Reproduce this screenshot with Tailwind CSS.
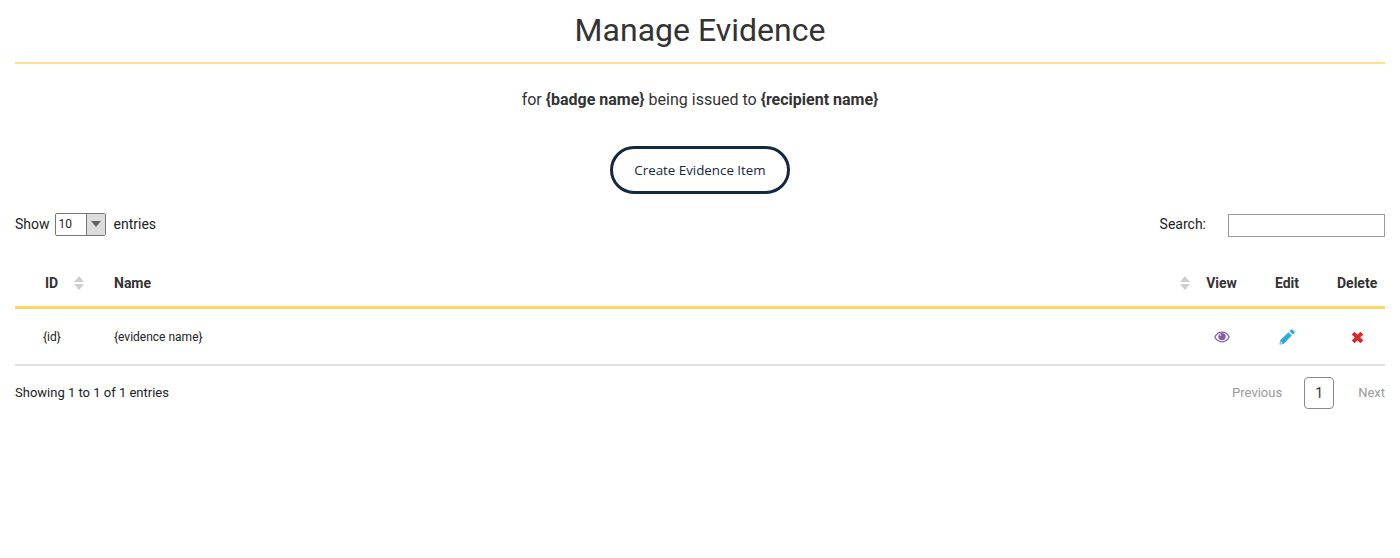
<!DOCTYPE html>
<html lang="en">
<head>
    <meta charset="UTF-8">
    <meta name="viewport" content="width=device-width, initial-scale=1.0">
    <title>Manage Evidence</title>
    <script src="https://cdn.jsdelivr.net/npm/@tailwindcss/browser@4"></script>
</head>
<body class="bg-white text-[#333] font-['Roboto',sans-serif]">
    <div class="px-[15px]">
        <h1 class="h-[64px] pt-[10px] border-b-2 border-[#fde28e] text-center text-[32px] leading-[40px]">Manage Evidence</h1>
        <p class="mt-[25px] text-center text-[16px] leading-[22px]">for <b>{badge name}</b> being issued to <b>{recipient name}</b></p>

        <div class="mt-[35px] flex justify-center">
            <button class="w-[180px] h-[48px] pt-[2px] rounded-full border-[3px] border-[#12293e] text-[13.33px] text-[#12293e] font-['Open_Sans',sans-serif]">Create Evidence Item</button>
        </div>

        <div class="mt-[18px] h-[24px] flex items-center justify-between text-[14px] text-[#222]">
            <div class="flex items-center">
                <span>Show</span>
                <span class="ml-[5px] w-[51px] h-[23px] flex border border-[#777] rounded-[2px] text-[12px]">
                    <span class="flex-1 pl-[3px] leading-[21px]">10</span>
                    <span class="w-[19px] flex items-center justify-center bg-[#dcdcdc] border-l border-[#777]">
                        <svg width="10" height="6" viewBox="0 0 10 6"><path d="M0 0h10L5 6z" fill="#666"/></svg>
                    </span>
                </span>
                <span class="ml-[8px]">entries</span>
            </div>
            <div class="flex items-center">
                <span>Search:</span>
                <input type="text" class="ml-[22px] mt-[2px] w-[157px] h-[23px] border border-[#999]">
            </div>
        </div>

        <table class="mt-[25px] w-full table-fixed border-collapse">
            <colgroup>
                <col class="w-[84px]">
                <col>
                <col class="w-[61px]">
                <col class="w-[70px]">
                <col class="w-[63px]">
            </colgroup>
            <thead>
                <tr class="h-[46px] border-b-[3px] border-[#fdd663] text-[14px] font-bold">
                    <th class="pl-[30px] text-left">
                        <div class="flex items-center">
                            <span>ID</span>
                            <svg class="ml-[16px]" width="10" height="14" viewBox="0 0 10 14"><path d="M5 0l5 6H0zM0 8h10l-5 6z" fill="#cfcfcf"/></svg>
                        </div>
                    </th>
                    <th class="pl-[15px] pr-[1px] text-left">
                        <div class="flex items-center justify-between">
                            <span>Name</span>
                            <svg width="10" height="14" viewBox="0 0 10 14"><path d="M5 0l5 6H0zM0 8h10l-5 6z" fill="#cfcfcf"/></svg>
                        </div>
                    </th>
                    <th class="text-center">View</th>
                    <th class="text-center">Edit</th>
                    <th class="pl-[15px] pr-[8px] text-center">Delete</th>
                </tr>
            </thead>
            <tbody>
                <tr class="h-[58px] border-b-2 border-[#e2e2e2] text-[12px] text-[#222]">
                    <td class="pl-[28px] pt-[2px]">{id}</td>
                    <td class="pl-[15px] pt-[2px]">{evidence name}</td>
                    <td class="pt-[2px]">
                        <svg class="mx-auto" width="16" height="12" viewBox="0 0 16 12"><path d="M.8 6C2.400 3 5 1.200 8 1.200S13.600 3 15.200 6C13.600 9 11 10.800 8 10.800S2.400 9 .8 6z" fill="none" stroke="#7f5fa8" stroke-width="1.300"/><circle cx="8" cy="5.600" r="3.700" fill="#7f5fa8"/><circle cx="6.300" cy="4" r="1" fill="#d9cde8"/></svg>
                    </td>
                    <td class="pt-[2px]">
                        <svg class="mx-auto" width="16" height="16" viewBox="0 0 15 15" fill="#29abe2"><path d="M11.200.6a1 1 0 0 1 1.400 0l1.800 1.800a1 1 0 0 1 0 1.400l-1.400 1.400-3.200-3.200zM8.800 3l3.200 3.200-7.800 7.800L.5 14.500 1 10.800z"/><path d="M1.600 11.600l1.800 1.800-2 .4z" fill="#fff"/></svg>
                    </td>
                    <td class="pl-[15px] pr-[7px] pt-[2px]">
                        <svg class="mx-auto" width="13" height="13" viewBox="0 0 12 12"><path d="M2 2l8 8M10 2l-8 8" stroke="#d52b2b" stroke-width="3.800"/></svg>
                    </td>
                </tr>
            </tbody>
        </table>

        <div class="mt-[11px] flex items-center justify-between text-[13px] text-[#222]">
            <span>Showing 1 to 1 of 1 entries</span>
            <div class="flex items-center text-[#999]">
                <span>Previous</span>
                <span class="ml-[22px] w-[30px] h-[32px] flex items-center justify-center border border-[#888] rounded-[4px] text-[#333] text-[14px]">1</span>
                <span class="ml-[24px]">Next</span>
            </div>
        </div>
    </div>
</body>
</html>
